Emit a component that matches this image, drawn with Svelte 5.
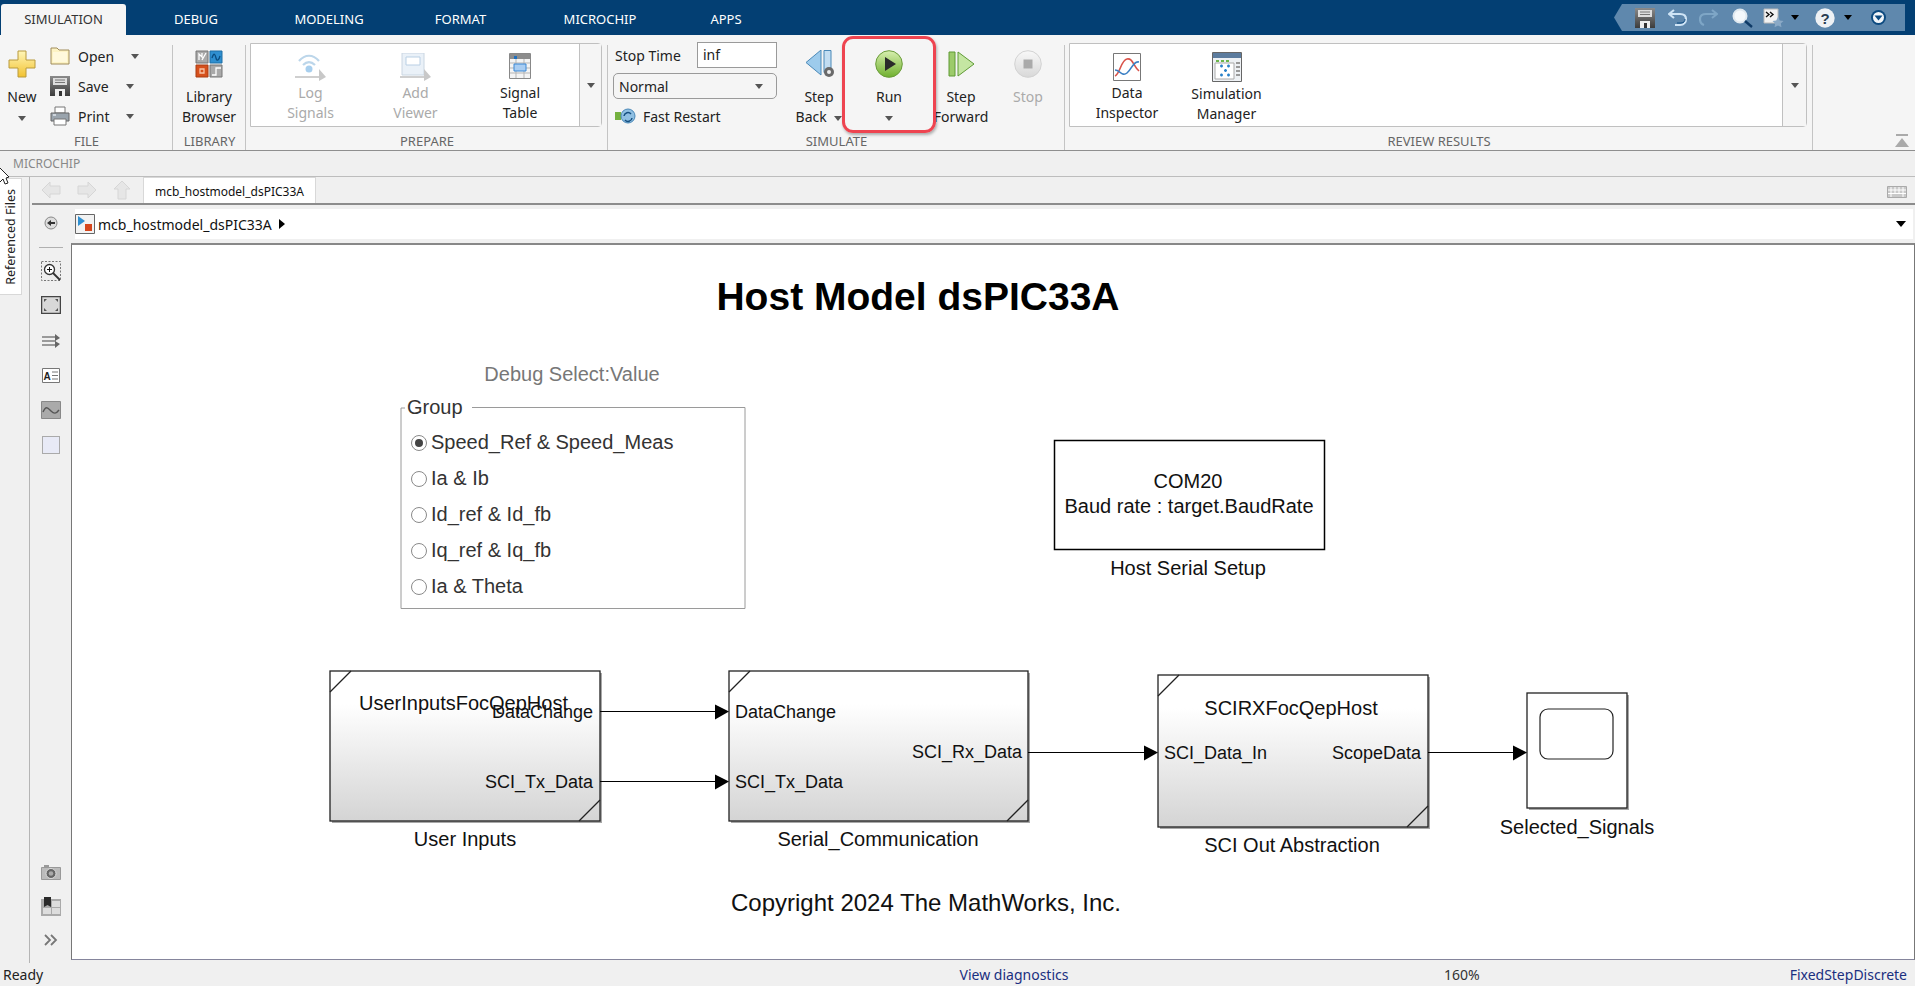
<script>
  const tabs = ['SIMULATION', 'DEBUG', 'MODELING', 'FORMAT', 'MICROCHIP', 'APPS'];

  // diagram data, in page coordinates (the svg viewBox starts at the canvas corner)
  const subsystems = [
    { x: 330, y: 671, w: 270, h: 150 },
    { x: 729, y: 671, w: 299, h: 150 },
    { x: 1158, y: 675, w: 270, h: 152 }
  ];
  const wires = [
    { x1: 600, x2: 729, y: 711 },
    { x1: 600, x2: 729, y: 781 },
    { x1: 1028, x2: 1158, y: 752 },
    { x1: 1428, x2: 1527, y: 752 }
  ];
  const texts = [
    { t: 'UserInputsFocQepHost', x: 463.5, y: 710, a: 'middle', big: true },
    { t: 'DataChange', x: 593, y: 718, a: 'end' },
    { t: 'SCI_Tx_Data', x: 593, y: 788, a: 'end' },
    { t: 'DataChange', x: 735, y: 718, a: 'start' },
    { t: 'SCI_Tx_Data', x: 735, y: 788, a: 'start' },
    { t: 'SCI_Rx_Data', x: 1022, y: 758, a: 'end' },
    { t: 'SCIRXFocQepHost', x: 1291, y: 715, a: 'middle', big: true },
    { t: 'SCI_Data_In', x: 1164, y: 759, a: 'start' },
    { t: 'ScopeData', x: 1421, y: 759, a: 'end' },
    { t: 'User Inputs', x: 465, y: 846, a: 'middle', big: true },
    { t: 'Serial_Communication', x: 878, y: 846, a: 'middle', big: true },
    { t: 'SCI Out Abstraction', x: 1292, y: 852, a: 'middle', big: true },
    { t: 'Selected_Signals', x: 1577, y: 834, a: 'middle', big: true },
    { t: 'Host Serial Setup', x: 1188, y: 575, a: 'middle', big: true },
    { t: 'COM20', x: 1188, y: 488, a: 'middle', big: true },
    { t: 'Baud rate : target.BaudRate', x: 1189, y: 513, a: 'middle', big: true }
  ];
  const radios = [
    { t: 'Speed_Ref & Speed_Meas', y: 443, on: true },
    { t: 'Ia & Ib', y: 479 },
    { t: 'Id_ref & Id_fb', y: 515 },
    { t: 'Iq_ref & Iq_fb', y: 551 },
    { t: 'Ia & Theta', y: 587 }
  ];
</script>

<svg class="defs" width="0" height="0" aria-hidden="true">
  <defs>
    <linearGradient id="blockFill" x1="0" y1="0" x2="0" y2="1">
      <stop offset="0.22" stop-color="#ffffff" />
      <stop offset="1" stop-color="#d4d4d4" />
    </linearGradient>
    <linearGradient id="plusFill" x1="0" y1="0" x2="0" y2="1">
      <stop offset="0" stop-color="#fff6b8" />
      <stop offset="1" stop-color="#f2c230" />
    </linearGradient>
    <linearGradient id="greenBall" x1="0" y1="0" x2="0" y2="1">
      <stop offset="0" stop-color="#d8efb0" />
      <stop offset="1" stop-color="#6fb02e" />
    </linearGradient>
    <linearGradient id="greyBall" x1="0" y1="0" x2="0" y2="1">
      <stop offset="0" stop-color="#f8f8f8" />
      <stop offset="1" stop-color="#d8d8d8" />
    </linearGradient>
    <linearGradient id="floppy" x1="0" y1="0" x2="0" y2="1">
      <stop offset="0" stop-color="#8a8a8a" />
      <stop offset="1" stop-color="#3c3c3c" />
    </linearGradient>
  </defs>
</svg>

<div class="app">
  <header class="topbar">
    <nav class="tabs">
      {#each tabs as tab, i}
        <div class="tab" class:active={i === 0}>{tab}</div>
      {/each}
    </nav>
    <div class="qat">
      <svg class="q-save" width="20" height="20" viewBox="0 0 20 20"><path d="M0 0h20v20H0z" fill="url(#floppy)" /><path d="M3 2h14v7H3z" fill="#ddd" /><path d="M5 4h10M5 6.5h10" stroke="#777" /><path d="M5 13h10v7H5z" fill="#eee" /><path d="M9 15h3v5H9z" fill="#333" /></svg>
      <svg class="q-undo" width="20" height="18" viewBox="0 0 20 18"><path d="M6 1 1 5l5 4M2 5h10c4 0 6 2 6 5s-2 6-6 6H7" fill="none" stroke="#cfe4f5" stroke-width="2.2" /><path d="M9 14h4c3 0 4-2 4-4" fill="none" stroke="#0d4a80" stroke-width="1" /></svg>
      <svg class="q-redo" width="19" height="18" viewBox="0 0 19 18"><path d="M13 1l5 4-5 4M17 5H7C3 5 1 7 1 10s1 5 4 6" fill="none" stroke="#7ea6c6" stroke-width="2.2" /></svg>
      <svg class="q-find" width="21" height="20" viewBox="0 0 21 20"><circle cx="8" cy="8" r="6.5" fill="#f4f8fb" stroke="#dfe8ef" stroke-width="2" /><path d="m13 13 7 6" stroke="#0e3a66" stroke-width="2.4" /></svg>
      <svg class="q-short" width="21" height="20" viewBox="0 0 21 20"><path d="M1 1h14v14H1z" fill="#f2f2f2" stroke="#bbb" /><path d="m3 4 3 2.500-3 2.500m4-5 3 2.500L7 9" fill="none" stroke="#111" stroke-width="1.400" /><path d="m15 9 1.800 3.500 3.700.5-2.700 2.600.7 3.700-3.500-1.800-3.500 1.800.7-3.700-2.700-2.600 3.700-.5z" fill="#8aa9c6" /></svg>
      <span class="q-arrow"></span>
      <svg class="q-help" width="20" height="20" viewBox="0 0 20 20"><circle cx="10" cy="10" r="9.700" fill="#eef1f4" /><text x="10" y="15.500" text-anchor="middle" class="help-mark">?</text></svg>
      <span class="q-arrow"></span>
      <svg class="q-round" width="15" height="15" viewBox="0 0 15 15"><circle cx="7.500" cy="7.500" r="7.500" fill="#0c4a80" /><circle cx="7.500" cy="7.500" r="5.500" fill="#f2f6fa" /><path d="M3.500 5.500h8l-4 5z" fill="#0c4a80" /></svg>
    </div>
  </header>

  <section class="ribbon">
    <div class="group g-file">
      <div class="g-body">
        <div class="tool new">
          <svg class="big" width="28" height="28" viewBox="0 0 28 28"><path d="M10 1h8v9h9v8h-9v9h-8v-9H1v-8h9z" fill="url(#plusFill)" stroke="#b99a3c" /></svg>
          <span class="line">New</span>
          <span class="line"><i class="drop"></i></span>
        </div>
        <div class="file-list">
          <div class="row">
            <svg width="20" height="18" viewBox="0 0 20 18"><path d="M1 1h6l2 2h10v14H1z" fill="#fdf3c4" stroke="#a08c5a" /><path d="M3 5h14v10H3z" fill="#fff9dc" /></svg>
            <span class="row-label">Open</span><i class="drop at-open"></i>
          </div>
          <div class="row">
            <svg width="20" height="20" viewBox="0 0 20 20"><path d="M0 0h20v20H0z" fill="url(#floppy)" /><path d="M3 2h14v7H3z" fill="#ddd" /><path d="M5 4h10M5 6.500h10" stroke="#777" /><path d="M5 13h10v7H5z" fill="#eee" /><path d="M9 15h3v5H9z" fill="#333" /></svg>
            <span class="row-label">Save</span><i class="drop"></i>
          </div>
          <div class="row">
            <svg width="20" height="20" viewBox="0 0 20 20"><path d="M5 1h10v6H5z" fill="#fff" stroke="#777" /><path d="M1 7h18v8H1z" fill="#9aa4ad" stroke="#666" /><path d="M4 13h12v6H4z" fill="#fff" stroke="#777" /><path d="M3 9h3" stroke="#dfe6ec" stroke-width="1.500" /></svg>
            <span class="row-label">Print</span><i class="drop"></i>
          </div>
        </div>
      </div>
      <div class="g-label">FILE</div>
    </div>

    <div class="group g-lib">
      <div class="g-body">
        <div class="tool lib">
          <svg class="big" width="28" height="28" viewBox="0 0 28 28"><path d="M1 1h12v12H1z" fill="#a9a9a9" stroke="#777" /><path d="M4 10V4l3 3V3m0 7 4-7" fill="none" stroke="#fff" stroke-width="1.300" /><path d="M15 1h12v12H15z" fill="#2f8fd0" stroke="#1e6ea5" /><path d="M17 8c2-6 3-4 4 0s3 2 4-2" fill="none" stroke="#0b4d80" stroke-width="1.300" /><path d="M1 15h12v12H1z" fill="#d6501c" stroke="#a93c12" /><path d="M5 19h4v4H5z" fill="none" stroke="#f7c2a5" stroke-width="1.300" /><path d="M15 15h12v12H15z" fill="#a9a9a9" stroke="#777" /><path d="M17 25h4v-7h5" fill="none" stroke="#fff" stroke-width="1.300" /></svg>
          <span class="line">Library</span>
          <span class="line">Browser</span>
        </div>
      </div>
      <div class="g-label">LIBRARY</div>
    </div>

    <div class="group g-prep">
      <div class="g-body">
        <div class="gallery">
          <div class="gallery-items">
            <div class="tool off">
              <svg class="big" width="32" height="28" viewBox="0 0 32 28"><path d="M4 8c6-7 14-7 20 0M8 12c4-4 8-4 12 0" fill="none" stroke="#bcd6ea" stroke-width="2.200" /><circle cx="14" cy="16" r="3.500" fill="#a8cfee" /><path d="M0 24h26" stroke="#cfcfcf" stroke-width="2" /><path d="M24 16l7 8-7 4z" fill="#c8c8c8" /></svg>
              <span class="line">Log</span><span class="line">Signals</span>
            </div>
            <div class="tool off">
              <svg class="big" width="32" height="28" viewBox="0 0 32 28"><path d="M2 0h22v22H2z" fill="#eaf1f8" stroke="#cad6e2" /><path d="M6 4h14v8H6z" fill="#fff" stroke="#b9cfe4" /><path d="M0 24h26" stroke="#cfcfcf" stroke-width="2" /><path d="M24 16l7 8-7 4z" fill="#c8c8c8" /></svg>
              <span class="line">Add</span><span class="line">Viewer</span>
            </div>
            <div class="tool">
              <svg class="big" width="22" height="28" viewBox="0 0 22 28"><path d="M.5.500h21v25H.5z" fill="#f4f4f4" stroke="#888" /><path d="M1 1h20v5H1z" fill="#8c8c8c" /><path d="M5 3h3v3H5z" fill="#1c6fc0" /><path d="M1 10h20M1 15h20M1 20h20M7 6v19M15 6v19" stroke="#b5b5b5" /><path d="M5 11h12v7H5z" fill="#a9cdf2" stroke="#3b87d4" /></svg>
              <span class="line">Signal</span><span class="line">Table</span>
            </div>
          </div>
          <div class="gallery-more"><i class="drop"></i></div>
        </div>
      </div>
      <div class="g-label">PREPARE</div>
    </div>

    <div class="group g-sim">
      <div class="g-body">
        <div class="sim-controls">
          <div class="stop-row">
            <span>Stop Time</span>
            <div class="stop-input">inf</div>
          </div>
          <div class="mode">Normal<i class="drop"></i></div>
          <div class="fast">
            <svg width="21" height="16" viewBox="0 0 21 16"><path d="M0 4h6v8H0z" fill="#74b03f" /><circle cx="13" cy="8" r="7" fill="#8fbfe2" stroke="#4a88b8" /><path d="M9 8a4 4 0 0 1 7-2m1 4a4 4 0 0 1-7 2" fill="none" stroke="#154f80" stroke-width="1.500" /></svg>
            <span>Fast Restart</span>
          </div>
        </div>
        <div class="tool w-back">
          <svg class="big" width="30" height="28" viewBox="0 0 30 28"><path d="M17 0v25L2 12.500z" fill="#9dcbec" stroke="#4b89b8" /><path d="M20 .5h7v22h-7z" fill="#c2ddf2" stroke="#4b89b8" /><circle cx="25" cy="22" r="5" fill="#6a6a6a" /><circle cx="25" cy="22" r="2" fill="#eee" /></svg>
          <span class="line">Step</span>
          <span class="line">Back <i class="drop inline"></i></span>
        </div>
        <div class="tool w-run">
          <svg class="big" width="28" height="28" viewBox="0 0 28 28"><circle cx="14" cy="14" r="13.300" fill="url(#greenBall)" stroke="#6a9c3a" /><path d="M10 7l11 7-11 7z" fill="#2a2a2a" /></svg>
          <span class="line">Run</span>
          <span class="line"><i class="drop"></i></span>
        </div>
        <div class="tool w-forward">
          <svg class="big" width="27" height="28" viewBox="0 0 27 28"><path d="M1 2h6v24H1z" fill="#9ccb6a" stroke="#5f9a35" /><path d="M10 2l16 12-16 12z" fill="#c4e6a2" stroke="#5f9a35" /></svg>
          <span class="line">Step</span>
          <span class="line">Forward</span>
        </div>
        <div class="tool off w-stop">
          <svg class="big" width="28" height="28" viewBox="0 0 28 28"><circle cx="14" cy="14" r="13.300" fill="url(#greyBall)" stroke="#d2d2d2" /><path d="M9.500 9.500h9v9h-9z" fill="#aaa" /></svg>
          <span class="line">Stop</span>
        </div>
        <div class="highlight"></div>
      </div>
      <div class="g-label">SIMULATE</div>
    </div>

    <div class="group g-review">
      <div class="g-body">
        <div class="gallery">
          <div class="gallery-items review-items">
            <div class="tool w-inspect">
              <svg class="big" width="28" height="28" viewBox="0 0 28 28"><path d="M.5.500h27v27H.5z" fill="#fff" stroke="#777" /><path d="M2 23c5-2 6-16 12-17s6 7 12 12" fill="none" stroke="#d9534a" stroke-width="1.600" /><path d="M2 17c5 0 7 7 12 3s6-12 12-11" fill="none" stroke="#3a7fc4" stroke-width="1.600" /></svg>
              <span class="line">Data</span><span class="line">Inspector</span>
            </div>
            <div class="tool w-manager">
              <svg class="big mgr" width="30" height="30" viewBox="0 0 30 30"><path d="M.5.500h29v29H.5z" fill="#eef1f4" stroke="#666" /><path d="M1 1h28v5H1z" fill="#5c7c9e" /><path d="M4 8h3v2H4zM9 8h3v2H9zM14 8h3v2h-3z" fill="#6cb64a" /><path d="M3 11h19v16H3z" fill="#fff" stroke="#aaa" /><path d="M24 11h4M24 15h4M24 19h4M24 23h4" stroke="#999" stroke-width="2" /><path d="M8 14h3M9.500 12.500v3M15 14h3M16.500 12.500v3M8 23h3M9.500 21.500v3M15 23h3M16.500 21.500v3M12 18.500h3M13.500 17v3" stroke="#2a82c9" stroke-width="1.500" /></svg>
              <span class="line">Simulation</span><span class="line">Manager</span>
            </div>
          </div>
          <div class="gallery-more"><i class="drop"></i></div>
        </div>
      </div>
      <div class="g-label">REVIEW RESULTS</div>
    </div>

    <div class="group g-end">
      <svg class="collapse" width="14" height="14" viewBox="0 0 14 14"><path d="M1 1h12v2H1z" fill="#aaa" /><path d="M7 5l7 9H0z" fill="#aaa" /></svg>
    </div>
  </section>

  <div class="microbar">MICROCHIP</div>

  <div class="workspace">
    <aside class="rail">
      <div class="rail-tab"><span>Referenced Files</span></div>
    </aside>

    <div class="editor">
      <div class="strip">
        <div class="nav-arrows">
          <svg width="20" height="18" viewBox="0 0 20 18"><path d="M9 1 1 9l8 8v-4h10V5H9z" fill="#e6e6e6" stroke="#d6d6d6" /></svg>
          <svg width="20" height="18" viewBox="0 0 20 18"><path d="m11 1 8 8-8 8v-4H1V5h10z" fill="#e6e6e6" stroke="#d6d6d6" /></svg>
          <svg width="18" height="20" viewBox="0 0 18 20"><path d="m9 1 8 8h-4v10H5V9H1z" fill="#e6e6e6" stroke="#d6d6d6" /></svg>
        </div>
        <div class="file-tab">mcb_hostmodel_dsPIC33A</div>
        <svg class="kbd" width="20" height="12" viewBox="0 0 20 12"><path d="M.5.500h19v11H.5z" fill="#c9c9c9" stroke="#aaa" /><path d="M1 4h18M1 7.500h18M4 1v10M8 1v6.500M12 1v6.500M16 1v10" stroke="#fff" /></svg>
      </div>

      <div class="editor-grid">
        <div class="palette">
          <svg width="14" height="14" viewBox="0 0 14 14"><circle cx="7" cy="7" r="6" fill="#ddd" stroke="#888" /><path d="M3 7l4-3v2h4v2H7v2z" fill="#333" /></svg>
          <div class="pal-sep"></div>
          <svg width="20" height="20" viewBox="0 0 20 20"><path d="M.5.500h19v19H.5z" fill="#eee" stroke="#777" stroke-dasharray="2 1.500" /><circle cx="8.500" cy="8.500" r="5" fill="#fff" stroke="#333" stroke-width="1.300" /><path d="M6 8.500h5M8.500 6v5" stroke="#111" /><path d="m12 12 7 7" stroke="#333" stroke-width="1.800" /></svg>
          <svg width="20" height="18" viewBox="0 0 20 18"><path d="M.5.500h19v17H.5z" fill="#d8d8d8" stroke="#444" stroke-width="1.500" /><path d="M3 3h3L3 6zM17 3h-3l3 3zM3 15h3l-3-3zM17 15h-3l3-3z" fill="#555" /></svg>
          <svg width="20" height="14" viewBox="0 0 20 14"><path d="M1 3h14M1 7h14M1 11h14" stroke="#444" /><path d="m14 0 5 4-5 3zM14 7l5 3-5 4z" fill="#666" /></svg>
          <svg width="18" height="15" viewBox="0 0 18 15"><path d="M.5.500h17v14H.5z" fill="#fff" stroke="#777" /><text x="1.500" y="11.500" class="pal-a">A</text><path d="M10 4h6M10 7.500h6M10 11h6" stroke="#777" /></svg>
          <svg width="20" height="18" viewBox="0 0 20 18"><path d="M.5.500h19v17H.5z" fill="#aaa" stroke="#888" /><path d="M2 11c3-7 5-4 8-1s5 3 8-1" fill="none" stroke="#555" stroke-width="1.400" /></svg>
          <div class="pal-rect"></div>
          <div class="pal-fill"></div>
          <svg width="20" height="16" viewBox="0 0 20 16"><path d="M.5 3.500h19v12H.5z" fill="#bbb" stroke="#999" /><path d="M3 1h5v3H3z" fill="#999" /><circle cx="10" cy="9.500" r="5" fill="#666" stroke="#ddd" /><circle cx="10" cy="9.500" r="2.300" fill="#aaa" /></svg>
          <svg width="20" height="19" viewBox="0 0 20 19"><path d="M0 2h20v17H0z" fill="#aaa" /><path d="M11 4h8v6h-8zM11 11h8v6h-8zM2 11h8v6H2z" fill="#ddd" /><path d="M3 0h7v10l-3.500-2L3 10z" fill="#2a2a2a" /></svg>
          <svg width="14" height="12" viewBox="0 0 14 12"><path d="m1 1 5 5-5 5M7 1l5 5-5 5" fill="none" stroke="#777" stroke-width="1.800" /></svg>
        </div>

        <div class="address">
          <svg width="20" height="20" viewBox="0 0 20 20"><path d="M.5.500h19v19H.5z" fill="#f2f2f2" stroke="#666" /><path d="M3 2l7 5-7 5z" fill="#2f8fd0" /><path d="M10 10h7v7h-7z" fill="#d6461c" /></svg>
          <span>mcb_hostmodel_dsPIC33A</span>
          <i class="crumb"></i>
          <i class="addr-drop"></i>
        </div>

        <div class="canvas">
          <svg class="diagram" viewBox="72 245 1841 715" width="1841" height="715">
            <text x="918" y="310" text-anchor="middle" class="title">Host Model dsPIC33A</text>

            <text x="572" y="381" text-anchor="middle" class="debug">Debug Select:Value</text>
            <path d="M401 408V608.500H745V407.500H472" fill="none" stroke="#9a9a9a" />
            <path d="M401 408h4" stroke="#9a9a9a" />
            <text x="407" y="414" class="group-title">Group</text>
            {#each radios as r}
              <circle cx="419" cy={r.y} r="7.500" fill="#fff" stroke="#8a8a8a" />
              {#if r.on}<circle cx="419" cy={r.y} r="4" fill="#444" />{/if}
              <text x="431" y={r.y + 6} class="radio-label">{r.t}</text>
            {/each}

            <path d="M1054.500 440.500h270v109h-270z" fill="#fff" stroke="#000" stroke-width="1.500" />

            {#each subsystems as b}
              <rect x={b.x + 2} y={b.y + 2} width={b.w} height={b.h} fill="#a8a8a8" />
              <rect x={b.x} y={b.y} width={b.w} height={b.h} fill="url(#blockFill)" stroke="#222" stroke-width="1.300" />
              <path d="M{b.x} {b.y + 21}L{b.x + 21} {b.y}M{b.x + b.w - 21} {b.y + b.h}L{b.x + b.w} {b.y + b.h - 21}" stroke="#222" stroke-width="1.300" />
            {/each}

            <rect x="1529" y="695" width="100" height="115" fill="#a8a8a8" />
            <rect x="1527" y="693" width="100" height="115" fill="#fff" stroke="#222" stroke-width="1.300" />
            <rect x="1540" y="709" width="73" height="50" rx="8" fill="#fff" stroke="#222" stroke-width="1.200" />

            {#each wires as w}
              <path d="M{w.x1} {w.y}.5H{w.x2 - 10}" stroke="#000" />
              <path d="M{w.x2 - 14} {w.y - 7}.5L{w.x2} {w.y}.5L{w.x2 - 14} {w.y + 8}.5z" fill="#000" />
            {/each}

            {#each texts as l}
              <text x={l.x} y={l.y} text-anchor={l.a} class={l.big ? 'label big' : 'label'}>{l.t}</text>
            {/each}

            <text x="926" y="911" text-anchor="middle" class="label copy">Copyright 2024 The MathWorks, Inc.</text>
          </svg>
        </div>
      </div>
    </div>
  </div>

  <footer class="status">
    <span class="ready">Ready</span>
    <span class="diag">View diagnostics</span>
    <span class="zoom">160%</span>
    <span class="solver">FixedStepDiscrete</span>
  </footer>

  <svg class="cursor" width="10" height="20" viewBox="0 0 10 20"><path d="M-3 0 9 12 6 13 8 18 5 19 3 14 0 17" fill="#fff" stroke="#222" /></svg>
</div>

<style>
  :global(body) {
    margin: 0;
    background: #f0f0f0;
  }

  .defs {
    position: absolute;
  }

  .app {
    position: relative;
    width: 1915px;
    height: 986px;
    overflow: hidden;
    display: flex;
    flex-direction: column;
    font-family: "Noto Sans", "Open Sans", sans-serif;
    font-size: 14px;
    color: #222;
    background: #f0f0f0;
  }

  .topbar {
    height: 35px;
    flex: none;
    display: flex;
    background: #033f73;
  }

  .tabs {
    margin-left: 1px;
    display: grid;
    grid-template-columns: 125px 140px 126px 137px 142px 110px;
    align-items: end;
  }

  .tab {
    height: 31px;
    padding-bottom: 1px;
    box-sizing: border-box;
    display: flex;
    align-items: center;
    justify-content: center;
    color: #fff;
    font-size: 13px;
  }

  .tab.active {
    background: #f5f5f5;
    color: #333;
    border-radius: 3px 3px 0 0;
  }

  .qat {
    margin: 4px 10px 4px auto;
    width: 291px;
    height: 27px;
    background: #5f88ad;
    clip-path: polygon(0 50%, 8px 0, 100% 0, 100% 100%, 8px 100%);
    display: flex;
    align-items: center;
  }

  .q-save {
    margin-left: 21px;
  }

  .q-undo {
    margin-left: 13px;
  }

  .q-redo {
    margin-left: 11px;
  }

  .q-find {
    margin-left: 14px;
  }

  .q-short {
    margin-left: 10px;
  }

  .q-arrow {
    margin-left: 7px;
    width: 0;
    height: 0;
    border-left: 4.5px solid transparent;
    border-right: 4.5px solid transparent;
    border-top: 5px solid #000;
  }

  .q-help {
    margin-left: 16px;
  }

  .q-help + .q-arrow {
    margin-left: 9px;
  }

  .q-round {
    margin-left: 19px;
  }

  .help-mark {
    font: bold 15px "Liberation Sans", sans-serif;
    fill: #2b3d50;
  }

  .ribbon {
    height: 116px;
    flex: none;
    box-sizing: border-box;
    padding-top: 6px;
    display: grid;
    grid-template-columns: 173px 73px 362px 457px 748px 1fr;
    background: #f5f5f5;
    border-bottom: 1px solid #8f8f8f;
  }

  .group {
    display: flex;
    flex-direction: column;
    background: linear-gradient(#c4c4c4, #c4c4c4) right 4px / 1px calc(100% - 4px) no-repeat;
  }

  .g-body {
    height: 93px;
    display: flex;
    position: relative;
  }

  .g-label {
    height: 16px;
    line-height: 15px;
    text-align: center;
    font-size: 13px;
    color: #666;
  }

  .tool {
    display: flex;
    flex-direction: column;
    align-items: center;
    box-sizing: border-box;
    padding-top: 9px;
  }

  .big {
    height: 28px;
    margin-bottom: 9px;
  }

  .line {
    height: 20px;
    line-height: 20px;
    white-space: nowrap;
    color: #222;
  }

  .off .line {
    color: #aaa;
  }

  .drop {
    display: inline-block;
    width: 0;
    height: 0;
    border-left: 4.5px solid transparent;
    border-right: 4.5px solid transparent;
    border-top: 5px solid #555;
    vertical-align: middle;
  }

  .drop.inline {
    margin-left: 4px;
  }

  .new {
    width: 44px;
  }

  .file-list {
    margin-left: 6px;
  }

  .row {
    height: 30px;
    display: flex;
    align-items: center;
  }

  .row svg {
    width: 20px;
    flex: none;
  }

  .row-label {
    margin-left: 8px;
    width: 48px;
  }

  .drop.at-open {
    margin-left: 5px;
  }

  .lib {
    width: 72px;
  }

  .g-prep .g-body {
    padding-left: 4px;
  }

  .gallery {
    height: 84px;
    margin-top: 2px;
    box-sizing: border-box;
    display: flex;
    background: #fff;
    border: 1px solid #c0c0c0;
    border-radius: 0 4px 4px 0;
  }

  .g-prep .gallery {
    width: 352px;
  }

  .gallery-items {
    flex: 1;
    display: grid;
    grid-template-columns: 119px 91px 118px;
  }

  .gallery-items .big {
    margin-bottom: 2px;
  }

  .gallery-more {
    width: 23px;
    background: #f5f5f5;
    border-left: 1px solid #c0c0c0;
    display: flex;
    align-items: center;
    justify-content: center;
  }

  .g-sim .g-body {
    padding-left: 5px;
  }

  .sim-controls {
    width: 164px;
    flex: none;
  }

  .stop-row {
    margin-top: 1px;
    display: flex;
    align-items: center;
    justify-content: space-between;
    height: 26px;
    padding-left: 2px;
  }

  .stop-input {
    width: 80px;
    height: 26px;
    box-sizing: border-box;
    padding-left: 5px;
    line-height: 24px;
    background: #fff;
    border: 1px solid #9a9a9a;
  }

  .mode {
    margin-top: 5px;
    height: 26px;
    box-sizing: border-box;
    padding: 0 13px 0 5px;
    display: flex;
    align-items: center;
    justify-content: space-between;
    border: 1px solid #9a9a9a;
    border-radius: 5px;
  }

  .fast {
    margin-top: 6px;
    height: 22px;
    padding-left: 2px;
    display: flex;
    align-items: center;
    gap: 7px;
  }

  .w-back {
    width: 84px;
  }

  .w-run {
    width: 56px;
  }

  .w-forward {
    width: 88px;
  }

  .w-stop {
    width: 46px;
  }

  .highlight {
    position: absolute;
    left: 234px;
    top: -5px;
    width: 94px;
    height: 97px;
    box-sizing: border-box;
    border: 3px solid #ee4450;
    border-radius: 11px;
    box-shadow: 1px 2px 3px rgba(0, 0, 0, 0.3);
  }

  .g-review .g-body {
    padding-left: 4px;
  }

  .g-review .gallery {
    width: 738px;
  }

  .review-items {
    grid-template-columns: 114px 85px 1fr;
    padding-left: 0;
  }

  .mgr {
    height: 30px;
    margin-top: -1px;
  }

  .g-end {
    background: none;
    align-items: flex-end;
    justify-content: flex-end;
    padding: 0 6px 3px 0;
  }

  .microbar {
    height: 26px;
    flex: none;
    box-sizing: border-box;
    padding-left: 13px;
    line-height: 25px;
    font-size: 12px;
    color: #888;
    background: #f0f0f0;
    border-bottom: 1px solid #bdbdbd;
  }

  .workspace {
    height: 786px;
    flex: none;
    display: flex;
  }

  .rail {
    width: 29px;
    flex: none;
    padding-top: 1px;
    box-sizing: content-box;
    border-right: 1px solid #b5b5b5;
  }

  .rail-tab {
    width: 22px;
    height: 117px;
    display: flex;
    align-items: center;
    justify-content: center;
    background: #fff;
    border: 1px solid #d8d8d8;
    border-left: none;
    box-sizing: border-box;
  }

  .rail-tab span {
    writing-mode: vertical-rl;
    transform: rotate(180deg);
    white-space: nowrap;
    font-size: 12.5px;
  }

  .editor {
    flex: 1;
    min-width: 0;
    display: flex;
    flex-direction: column;
  }

  .strip {
    height: 28px;
    flex: none;
    margin-left: 2px;
    box-sizing: border-box;
    display: flex;
    align-items: flex-end;
    border-bottom: 2px solid #8c8c8c;
  }

  .nav-arrows {
    width: 111px;
    height: 26px;
    box-sizing: border-box;
    padding-left: 9px;
    display: flex;
    align-items: center;
    gap: 16px;
  }

  .file-tab {
    width: 173px;
    height: 26px;
    line-height: 27px;
    text-align: center;
    background: #fff;
    border: 1px solid #d8d8d8;
    border-bottom: none;
    box-sizing: border-box;
    font-size: 12px;
    color: #111;
  }

  .kbd {
    margin: 0 8px 5px auto;
  }

  .editor-grid {
    flex: 1;
    min-height: 0;
    display: grid;
    grid-template-columns: 41px 1fr;
    grid-template-rows: 38px 717px;
  }

  .palette {
    grid-row: 1 / 3;
    display: flex;
    flex-direction: column;
    align-items: center;
    box-sizing: border-box;
    padding-top: 11px;
  }

  .pal-sep {
    width: 24px;
    height: 1px;
    margin: 17px 0 13px;
    background: #b0b0b0;
  }

  .palette > svg:nth-of-type(2) {
    margin-bottom: 15px;
  }

  .palette > svg:nth-of-type(3) {
    margin-bottom: 20px;
  }

  .palette > svg:nth-of-type(4) {
    margin-bottom: 20px;
  }

  .palette > svg:nth-of-type(5) {
    margin-bottom: 18px;
  }

  .palette > svg:nth-of-type(6) {
    margin-bottom: 17px;
  }

  .pal-rect {
    width: 18px;
    height: 18px;
    box-sizing: border-box;
    background: #e8eaf6;
    border: 1px solid #aaa;
  }

  .pal-fill {
    flex: 1;
  }

  .palette > svg:nth-of-type(7) {
    margin-bottom: 17px;
  }

  .palette > svg:nth-of-type(8) {
    margin-bottom: 18px;
  }

  .palette > svg:nth-of-type(9) {
    margin-bottom: 14px;
  }

  .pal-a {
    font: bold 10px "Liberation Sans", sans-serif;
    fill: #222;
  }

  .address {
    margin: 4px 2px 4px 4px;
    height: 30px;
    display: flex;
    align-items: center;
    background: #fff;
    font-size: 14px;
    color: #111;
  }

  .address span {
    margin-left: 3px;
  }

  .crumb {
    margin-left: 7px;
    width: 0;
    height: 0;
    border-top: 5px solid transparent;
    border-bottom: 5px solid transparent;
    border-left: 6px solid #000;
  }

  .addr-drop {
    margin: 0 7px 0 auto;
    width: 0;
    height: 0;
    border-left: 5.5px solid transparent;
    border-right: 5.5px solid transparent;
    border-top: 6px solid #000;
  }

  .canvas {
    box-sizing: border-box;
    background: #fff;
    border: 1px solid #777;
    border-top: 2px solid #888;
    border-bottom-color: #85859c;
    overflow: hidden;
  }

  .diagram {
    display: block;
  }

  .diagram text {
    font-family: "Liberation Sans", Arial, sans-serif;
  }

  .title {
    font-size: 39px;
    font-weight: bold;
    fill: #000;
  }

  .debug {
    font-size: 20px;
    fill: #777;
  }

  .group-title {
    font-size: 20px;
    fill: #333;
  }

  .radio-label {
    font-size: 20px;
    fill: #333;
  }

  .label {
    font-size: 18px;
    fill: #111;
  }

  .label.big {
    font-size: 20px;
  }

  .label.copy {
    font-size: 24px;
  }

  .status {
    flex: 1;
    display: grid;
    grid-template-columns: 901px 220px 1fr auto;
    align-items: center;
    padding: 0 8px 0 3px;
    font-size: 14px;
    background: #f0f0f0;
  }

  .diag {
    text-align: center;
    color: #1a2f80;
  }

  .zoom {
    padding-left: 320px;
    color: #333;
  }

  .solver {
    color: #1a2f80;
  }

  .cursor {
    position: absolute;
    left: 0;
    top: 165px;
  }
</style>
